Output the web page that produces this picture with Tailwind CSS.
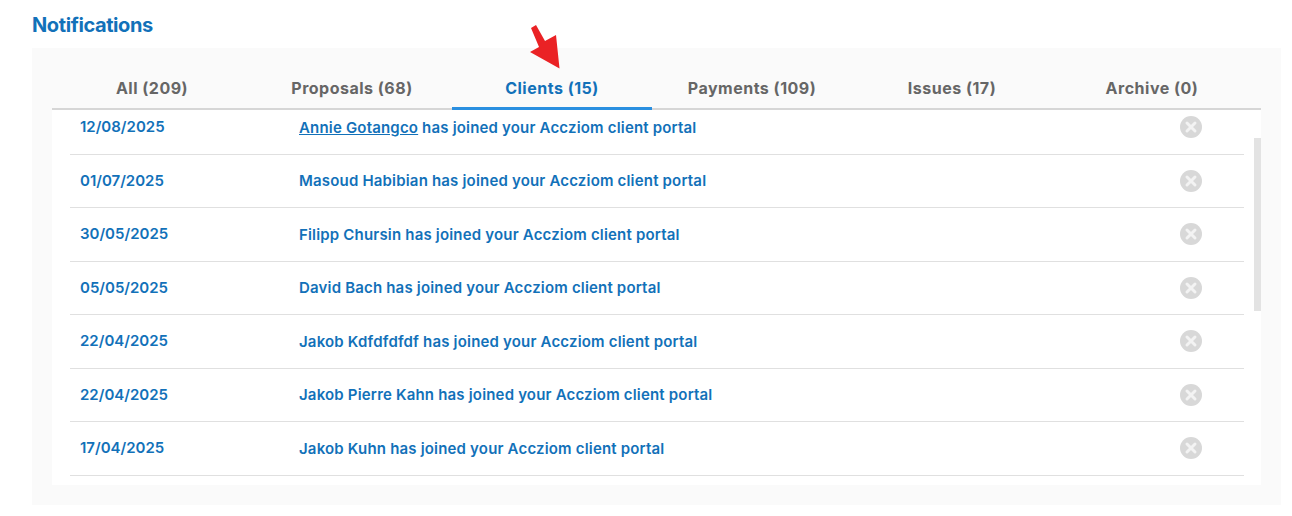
<!DOCTYPE html>
<html lang="en">
<head>
  <meta charset="UTF-8" />
  <title>Notifications</title>
  <script src="https://cdn.jsdelivr.net/npm/@tailwindcss/browser@4"></script>
</head>
<body class="bg-white font-['Inter',sans-serif] h-[516px] overflow-hidden">
  <div class="pt-[13px] pl-[32px] w-[1281px]">
    <h1 class="text-[20px] leading-[24px] font-bold text-[#1271b9] tracking-[-0.4px]">Notifications</h1>

    <div class="relative mt-[11px] bg-[#fafafa] h-[457px] px-[20px] pt-[20px]">
      <!-- Arrow -->
      <svg class="absolute left-[493px] top-[-28px]" width="40" height="52" viewBox="0 0 40 52">
        <path d="M6 8 L11 5 L20 21 L31 15 L34.500 48.500 L5 32 L14 27 Z" fill="#ea2225" />
      </svg>

      <!-- Tabs -->
      <div class="flex h-[42px] border-b-2 border-[#d6d6d6] text-[16px] font-bold text-[#666666] tracking-[0.5px]">
        <div class="w-[200px] text-center leading-[41px]">All (209)</div>
        <div class="w-[200px] text-center leading-[41px]">Proposals (68)</div>
        <div class="w-[200px] text-center leading-[41px] text-[#1271b9] border-b-[3px] border-[#2a8fe0] h-[42px]">Clients (15)</div>
        <div class="w-[200px] text-center leading-[41px]">Payments (109)</div>
        <div class="w-[200px] text-center leading-[41px]">Issues (17)</div>
        <div class="w-[200px] text-center leading-[41px]">Archive (0)</div>
      </div>

      <!-- List -->
      <div class="relative bg-white h-[375px] overflow-hidden pl-[18px] pr-[17px] text-[15px] font-semibold text-[#1271b9] tracking-[0.18px]">
        <div class="mt-[-9px]">
          <div class="flex items-center h-[53.5px] border-b border-[#e0e0e0]">
            <div class="w-[229px] pl-[10px] tracking-normal">12/08/2025</div>
            <div class="flex-1 pt-[1px]"><span class="underline">Annie Gotangco</span> has joined your Accziom client portal</div>
            <svg class="mr-[42px]" width="22" height="22" viewBox="0 0 22 22"><circle cx="11" cy="11" r="11" fill="#d8d8d8" /><path d="M7 7 L15 15 M15 7 L7 15" stroke="#f3f3f3" stroke-width="3" stroke-linecap="round" /></svg>
          </div>
          <div class="flex items-center h-[53.5px] border-b border-[#e0e0e0]">
            <div class="w-[229px] pl-[10px] tracking-normal">01/07/2025</div>
            <div class="flex-1 pt-[1px]">Masoud Habibian has joined your Accziom client portal</div>
            <svg class="mr-[42px]" width="22" height="22" viewBox="0 0 22 22"><circle cx="11" cy="11" r="11" fill="#d8d8d8" /><path d="M7 7 L15 15 M15 7 L7 15" stroke="#f3f3f3" stroke-width="3" stroke-linecap="round" /></svg>
          </div>
          <div class="flex items-center h-[53.5px] border-b border-[#e0e0e0]">
            <div class="w-[229px] pl-[10px] tracking-normal">30/05/2025</div>
            <div class="flex-1 pt-[1px]">Filipp Chursin has joined your Accziom client portal</div>
            <svg class="mr-[42px]" width="22" height="22" viewBox="0 0 22 22"><circle cx="11" cy="11" r="11" fill="#d8d8d8" /><path d="M7 7 L15 15 M15 7 L7 15" stroke="#f3f3f3" stroke-width="3" stroke-linecap="round" /></svg>
          </div>
          <div class="flex items-center h-[53.5px] border-b border-[#e0e0e0]">
            <div class="w-[229px] pl-[10px] tracking-normal">05/05/2025</div>
            <div class="flex-1 pt-[1px]">David Bach has joined your Accziom client portal</div>
            <svg class="mr-[42px]" width="22" height="22" viewBox="0 0 22 22"><circle cx="11" cy="11" r="11" fill="#d8d8d8" /><path d="M7 7 L15 15 M15 7 L7 15" stroke="#f3f3f3" stroke-width="3" stroke-linecap="round" /></svg>
          </div>
          <div class="flex items-center h-[53.5px] border-b border-[#e0e0e0]">
            <div class="w-[229px] pl-[10px] tracking-normal">22/04/2025</div>
            <div class="flex-1 pt-[1px]">Jakob Kdfdfdfdf has joined your Accziom client portal</div>
            <svg class="mr-[42px]" width="22" height="22" viewBox="0 0 22 22"><circle cx="11" cy="11" r="11" fill="#d8d8d8" /><path d="M7 7 L15 15 M15 7 L7 15" stroke="#f3f3f3" stroke-width="3" stroke-linecap="round" /></svg>
          </div>
          <div class="flex items-center h-[53.5px] border-b border-[#e0e0e0]">
            <div class="w-[229px] pl-[10px] tracking-normal">22/04/2025</div>
            <div class="flex-1 pt-[1px]">Jakob Pierre Kahn has joined your Accziom client portal</div>
            <svg class="mr-[42px]" width="22" height="22" viewBox="0 0 22 22"><circle cx="11" cy="11" r="11" fill="#d8d8d8" /><path d="M7 7 L15 15 M15 7 L7 15" stroke="#f3f3f3" stroke-width="3" stroke-linecap="round" /></svg>
          </div>
          <div class="flex items-center h-[53.5px] border-b border-[#e0e0e0]">
            <div class="w-[229px] pl-[10px] tracking-normal">17/04/2025</div>
            <div class="flex-1 pt-[1px]">Jakob Kuhn has joined your Accziom client portal</div>
            <svg class="mr-[42px]" width="22" height="22" viewBox="0 0 22 22"><circle cx="11" cy="11" r="11" fill="#d8d8d8" /><path d="M7 7 L15 15 M15 7 L7 15" stroke="#f3f3f3" stroke-width="3" stroke-linecap="round" /></svg>
          </div>
        </div>
        <!-- Scrollbar -->
        <div class="absolute right-0 top-[28px] w-[7px] h-[173px] bg-[#e3e3e3]"></div>
      </div>
    </div>
  </div>
</body>
</html>
